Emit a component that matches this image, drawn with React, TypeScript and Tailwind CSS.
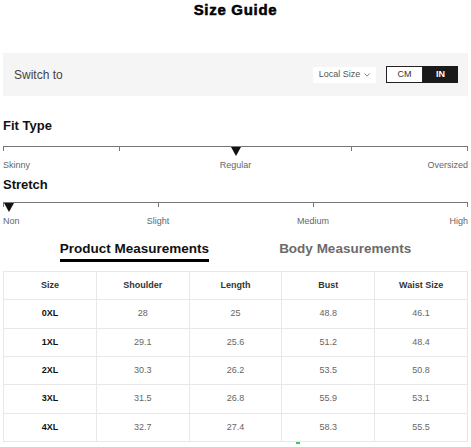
import React from 'react';

const rows = [
  ['0XL', '28', '25', '48.8', '46.1'],
  ['1XL', '29.1', '25.6', '51.2', '48.4'],
  ['2XL', '30.3', '26.2', '53.5', '50.8'],
  ['3XL', '31.5', '26.8', '55.9', '53.1'],
  ['4XL', '32.7', '27.4', '58.3', '55.5'],
];

const headers = ['Size', 'Shoulder', 'Length', 'Bust', 'Waist Size'];

const Marker: React.FC = () => (
  <svg width="10" height="9" viewBox="0 0 10 9" className="block">
    <polygon points="0,0 10,0 5,9" fill="#111" />
  </svg>
);

type Stop = { label?: string; marker?: boolean };

const Scale: React.FC<{ stops: Stop[] }> = ({ stops }) => (
  <div className="flex justify-between border-t border-[#777]">
    {stops.map((s, i) => {
      const first = i === 0;
      const last = i === stops.length - 1;
      const align = first ? 'items-start' : last ? 'items-end' : 'items-center';
      return (
        <div key={i} className={`relative flex w-0 flex-col ${align}`}>
          <div className="h-[4px] w-px bg-[#777]" />
          {s.marker && (
            <div className={`absolute top-0 ${first ? 'left-[1px]' : '-translate-x-1/2 left-0'}`}>
              <Marker />
            </div>
          )}
          {s.label && (
            <span className="mt-[8px] whitespace-nowrap text-[9px] leading-[12px] text-[#666]">{s.label}</span>
          )}
        </div>
      );
    })}
  </div>
);

const App: React.FC = () => {
  return (
    <div className="w-[471px] h-[447px] overflow-hidden bg-white px-[3px] font-['Liberation_Sans',Arial,sans-serif] text-[#222]">
      <h1 className="h-[20px] text-center text-[15px] font-bold leading-[20px] tracking-[0.7px] text-black [-webkit-text-stroke:0.5px_black]">
        Size Guide
      </h1>

      <div className="mt-[33px] flex h-[43px] items-center bg-[#f5f5f5] pl-[11px] pr-[10px]">
        <span className="text-[12px] text-[#444]">Switch to</span>
        <div className="ml-auto flex h-[16px] w-[63px] items-center justify-center gap-[4px] bg-white text-[9px] text-[#555]">
          Local Size
          <svg width="6" height="4" viewBox="0 0 6 4">
            <polyline points="0.5,0.5 3,3.2 5.5,0.5" fill="none" stroke="#777" strokeWidth="0.9" />
          </svg>
        </div>
        <div className="ml-[10px] flex h-[17px] w-[72px] text-[9px]">
          <div className="flex w-[37px] items-center justify-center border border-[#222] bg-white text-[#333]">CM</div>
          <div className="flex flex-1 items-center justify-center bg-[#1a1a1a] font-bold text-white">IN</div>
        </div>
      </div>

      <h2 className="mt-[22px] text-[13px] font-bold leading-[16px] text-[#111]">Fit Type</h2>
      <div className="mt-[12px]">
        <Scale
          stops={[{ label: 'Skinny' }, {}, { label: 'Regular', marker: true }, {}, { label: 'Oversized' }]}
        />
      </div>

      <h2 className="mt-[6px] text-[13px] font-bold leading-[16px] text-[#111]">Stretch</h2>
      <div className="mt-[9px]">
        <Scale stops={[{ label: 'Non', marker: true }, { label: 'Slight' }, { label: 'Medium' }, { label: 'High' }]} />
      </div>

      <div className="mt-[14px] flex justify-center gap-[70px] text-[13.5px] font-bold leading-[16px]">
        <span className="border-b-[3px] border-black pb-[2px] text-[#111]">Product Measurements</span>
        <span className="text-[#6b6b6b]">Body Measurements</span>
      </div>

      <div className="mt-[9px] grid grid-cols-5 border-l border-t border-[#e8e8e8] text-[9px]">
        {headers.map((h) => (
          <div key={h} className="flex h-[28.33px] items-center justify-center border-b border-r border-[#e8e8e8] font-bold text-[#333]">
            {h}
          </div>
        ))}
        {rows.map((r) =>
          r.map((c, j) => (
            <div
              key={r[0] + j}
              className={`flex h-[28.33px] items-center justify-center border-b border-r border-[#e8e8e8] ${
                j === 0 ? 'font-bold text-[#111]' : 'text-[#666]'
              }`}
            >
              {c}
            </div>
          ))
        )}
      </div>
      <div className="ml-[293px] h-[2px] w-[4px] bg-[#3cc85a]" />
    </div>
  );
};

export default App;
